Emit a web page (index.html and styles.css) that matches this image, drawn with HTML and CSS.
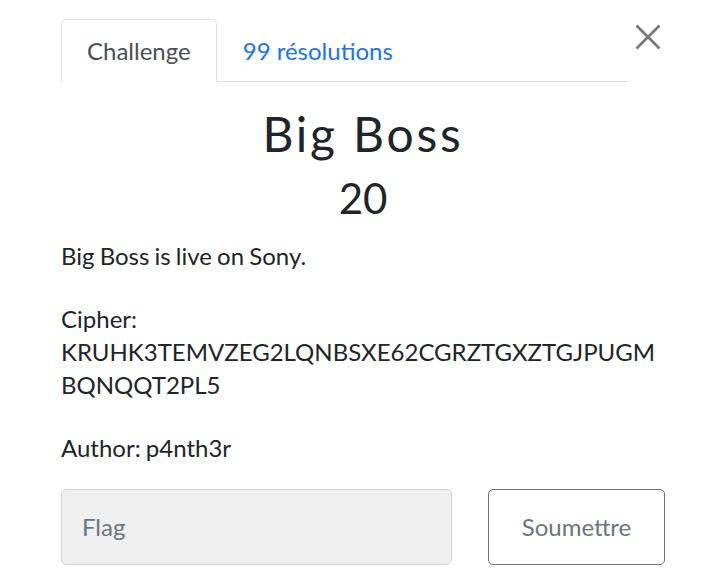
FILE: index.html
```html
<!DOCTYPE html>
<html lang="fr">
<head>
<meta charset="utf-8">
<title>Big Boss</title>
<link rel="stylesheet" href="styles.css">
</head>
<body>
<div class="modal">
  <div class="header">
    <ul class="tabs">
      <li class="tab active">Challenge</li>
      <li class="tab link">99 résolutions</li>
    </ul>
    <button class="close" aria-label="Close">
      <svg width="26" height="26" viewBox="0 0 26 26"><path d="M1.5 1.5 L24.5 24.5 M24.5 1.5 L1.5 24.5" stroke="#777" stroke-width="2.6" fill="none"/></svg>
    </button>
  </div>
  <h2 class="name">Big Boss</h2>
  <h3 class="value">20</h3>
  <div class="desc">
    <p>Big Boss is live on Sony.</p>
    <p>Cipher: <span class="cipher">KRUHK3TEMVZEG2LQNBSXE62CGRZTGXZTGJPUGMBQNQQT2PL5</span></p>
    <p>Author: p4nth3r</p>
  </div>
  <form class="submit">
    <input class="flag" type="text" placeholder="Flag">
    <button class="btn" type="button">Soumettre</button>
  </form>
</div>
</body>
</html>
```
FILE: styles.css
```css
* { box-sizing: border-box; }
body {
  margin: 0;
  background: #fff;
  font-family: Lato, "Open Sans", sans-serif;
  color: #212529;
}
.modal {
  width: 604px;
  margin-left: 61px;
  padding-top: 19px;
}
.header {
  display: flex;
  align-items: flex-start;
}
.tabs {
  list-style: none;
  margin: 0;
  padding: 0;
  display: flex;
  width: 568px;
  border-bottom: 1px solid #dee2e6;
}
.tab {
  font-size: 24px;
  line-height: 33px;
  padding: 14px 25px 14px;
  border: 1px solid transparent;
  border-radius: 5px 5px 0 0;
  margin-bottom: -1px;
}
.tab.active {
  color: #495057;
  border-color: #dee2e6 #dee2e6 #fff;
  background: #fff;
}
.tab.link {
  color: #1a73f0;
  padding-left: 25px;
}
.close {
  margin: 5px 0 0 6px;
  padding: 0;
  border: 0;
  background: none;
  width: 26px;
  height: 26px;
}
.close svg { display: block; }
.name {
  font-size: 48px;
  font-weight: 400;
  line-height: 1.2;
  letter-spacing: 2.8px;
  text-align: center;
  margin: 23px 0 0;
}
.value {
  font-size: 42px;
  font-weight: 400;
  line-height: 1.2;
  text-align: center;
  margin: 10px 0 0;
}
.desc {
  margin-top: 16px;
  font-size: 24px;
  line-height: 33px;
  word-spacing: -1px;
}
.desc p { margin: 0 0 30px; }
.cipher { overflow-wrap: anywhere; }
.submit {
  display: flex;
  gap: 36px;
  margin-top: -5px;
}
.flag {
  width: 391px;
  height: 76px;
  padding: 0 20px;
  font-family: inherit;
  font-size: 24px;
  color: #495057;
  background: #efefef;
  border: 1px solid #ced4da;
  border-radius: 5px;
}
.flag::placeholder { color: #6c757d; }
.btn {
  width: 177px;
  height: 76px;
  font-family: inherit;
  font-size: 24px;
  color: #6c757d;
  background: #fff;
  border: 1px solid #6c757d;
  border-radius: 5px;
}
```
